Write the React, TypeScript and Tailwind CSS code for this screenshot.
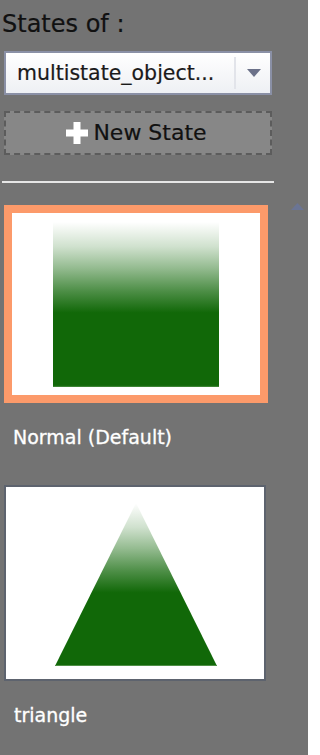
export default function App() {
  return (
    <div className="relative min-h-[755px] w-[308px] overflow-hidden bg-[#737373] font-['DejaVu_Sans',sans-serif]">
      <div className="pl-[2px] pt-[10px] text-[24px] leading-[28px] text-[#111] [-webkit-text-stroke:0.2px_#111]">States of :</div>

      <div className="ml-[4px] mt-[13px] flex h-[44px] w-[268px] items-center border-2 border-[#8a90a6] bg-gradient-to-b from-white to-[#eef0f4]">
        <div className="flex-1 overflow-hidden whitespace-nowrap pl-[11px] text-[20.5px] leading-[24px] text-[#1a1a1a] [-webkit-text-stroke:0.2px_#1a1a1a]">
          multistate_object...
        </div>
        <div className="h-[32px] w-[2px] bg-[#e2e4ea]" />
        <svg className="ml-[11px] mr-[9px]" width="14" height="8" viewBox="0 0 14 8">
          <polygon points="0,0 14,0 7,8" fill="#6b7189" />
        </svg>
      </div>

      <div className="ml-[4px] mt-[16px] flex h-[44px] w-[268px] items-center justify-center gap-[5px] border-2 border-dashed border-[#5c5c5c] bg-[#878787] pr-[3px]">
        <svg width="22" height="22" viewBox="0 0 22 22">
          <rect x="0" y="7.5" width="22" height="7" fill="#fff" />
          <rect x="7.5" y="0" width="7" height="22" fill="#fff" />
        </svg>
        <span className="text-[22px] leading-[26px] text-[#111] [-webkit-text-stroke:0.2px_#111]">New State</span>
      </div>

      <div className="ml-[2px] mt-[26px] h-[2px] w-[272px] bg-[#e6e6e6]" />

      <div className="ml-[4px] mt-[22px] h-[198px] w-[264px] border-[8px] border-[#fc9a6a] bg-white">
        <div className="ml-[41px] mt-[9px] h-[165px] w-[166px] bg-[linear-gradient(to_bottom,rgba(17,104,8,0)_0%,rgba(17,104,8,0.2)_15%,rgba(17,104,8,0.45)_28%,rgba(17,104,8,0.75)_42%,#116808_55%,#116808_99%,#4f8f46_100%)]" />
      </div>

      <div className="mt-[22px] pl-[13px] text-[19px] leading-[24px] text-white [-webkit-text-stroke:0.3px_#fff]">Normal (Default)</div>

      <div className="ml-[4px] mt-[36px] h-[196px] w-[262px] border-2 border-[#5d636e] bg-white">
        <svg width="258" height="192" viewBox="0 0 258 192">
          <defs>
            <linearGradient id="tg" x1="0" y1="16" x2="0" y2="179" gradientUnits="userSpaceOnUse">
              <stop offset="0" stopColor="#116808" stopOpacity="0" />
              <stop offset="0.15" stopColor="#116808" stopOpacity="0.2" />
              <stop offset="0.28" stopColor="#116808" stopOpacity="0.45" />
              <stop offset="0.42" stopColor="#116808" stopOpacity="0.75" />
              <stop offset="0.55" stopColor="#116808" stopOpacity="1" />
              <stop offset="1" stopColor="#116808" stopOpacity="1" />
            </linearGradient>
          </defs>
          <polygon points="130,16 211,179 49,179" fill="url(#tg)" />
          <rect x="49" y="178" width="162" height="1" fill="#4f8f46" />
        </svg>
      </div>

      <div className="mt-[22px] pl-[14px] text-[19px] leading-[24px] text-white [-webkit-text-stroke:0.3px_#fff]">triangle</div>

      <svg className="absolute left-[291px] top-[203px]" width="13" height="7" viewBox="0 0 13 7">
        <polygon points="6.5,0 13,7 0,7" fill="#6b7594" />
      </svg>
    </div>
  );
}
